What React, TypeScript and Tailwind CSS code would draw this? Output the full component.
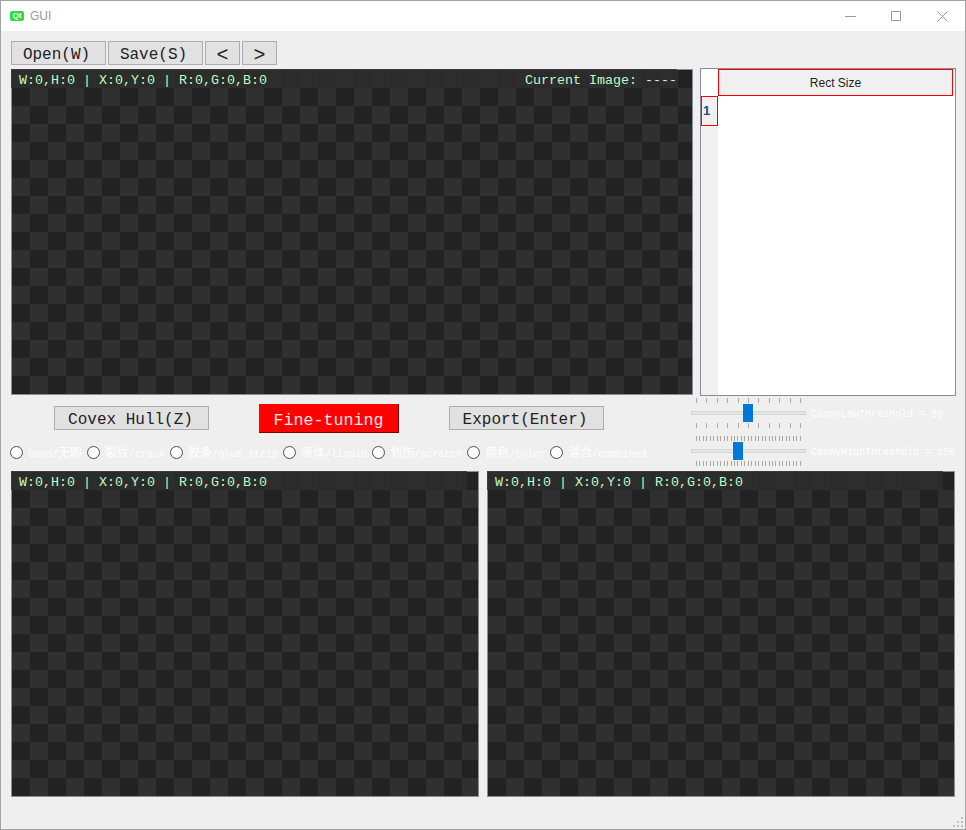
const mono = 'font-["Liberation_Mono",monospace]'

const radios = [
  ['Good/', '无暇'],
  ['', '裂纹', '/crack'],
  ['', '胶条', '/glue_strip'],
  ['', '液体', '/liquid'],
  ['', '划伤', '/scratch'],
  ['', '颜色', '/color'],
  ['', '混合', '/combined'],
]

function ImagePanel({ barClass, current }: { barClass: string; current?: boolean }) {
  return (
    <div className="relative h-[326px] border border-[#8c8c96] bg-[repeating-conic-gradient(#222222_0_25%,#303030_0_50%)] bg-[size:36px_36px]">
      <div className={`absolute -top-px -left-px h-[19px] bg-[#2d2d2d]/85 pl-[8px] pt-[4px] flex justify-between items-center text-[13.33px] leading-none text-[#c0fcc0] whitespace-pre font-["Liberation_Mono",monospace] ${barClass}`}>
        <span>W:0,H:0 | X:0,Y:0 | R:0,G:0,B:0</span>
        {current && <span>Current Image: ----</span>}
      </div>
    </div>
  )
}

function ToolButton({ label, className }: { label: string; className: string }) {
  return (
    <button className={`h-6 pt-[4px] bg-[#e1e1e1] border border-[#adadad] text-[#222] leading-none ${className} font-["Liberation_Mono",monospace]`}>
      {label}
    </button>
  )
}

function Ticks({ count }: { count: number }) {
  return (
    <div className="h-[5px] px-[5px] flex justify-between">
      {Array.from({ length: count }).map((_, i) => (
        <span key={i} className="w-px h-full bg-[#aaaa98]" />
      ))}
    </div>
  )
}

function Slider({ ticks, thumbClass, label }: { ticks: number; thumbClass: string; label: string }) {
  return (
    <div className="flex items-center gap-[5px]">
      <div className="w-[115px]">
        <Ticks count={ticks} />
        <div className="relative h-5 flex items-center">
          <div className="w-full h-1 bg-[#e4e6e4] border border-[#d2d8d2]" />
          <div className={`absolute top-px w-[10px] h-[18px] bg-[#0078d7] ${thumbClass}`} />
        </div>
        <Ticks count={ticks} />
      </div>
      <span className={`pt-[4px] text-[10px] leading-none text-white whitespace-pre ${mono}`}>{label}</span>
    </div>
  )
}

export default function App() {
  return (
    <div className="relative w-[966px] h-[830px] overflow-hidden flex flex-col bg-[#efefef] border border-[#a3a3a3]">
      <div className="absolute -top-px -left-px w-[350px] h-px bg-[#3a3a3a]" />

      {/* title bar */}
      <div className="h-[30px] shrink-0 bg-white flex items-center pl-[9px] pr-[17px]">
        <div className="w-[14px] h-[10px] rounded-[2px] bg-[#2cde45] text-white text-[8px] leading-[10px] font-bold text-center font-['Liberation_Sans',sans-serif]">
          Qt
        </div>
        <span className="ml-[6px] text-[12px] text-[#999] font-['Liberation_Sans',sans-serif]">GUI</span>
        <div className="ml-auto flex items-center gap-[35px]">
          <svg width="11" height="11" viewBox="0 0 11 11" stroke="#999" fill="none">
            <path d="M0 5.5H11" />
          </svg>
          <svg width="11" height="11" viewBox="0 0 11 11" stroke="#999" fill="none">
            <rect x="0.5" y="0.5" width="9" height="9" />
          </svg>
          <svg width="11" height="11" viewBox="0 0 11 11" stroke="#999" fill="none">
            <path d="M0.5 0.5L10.5 10.5M10.5 0.5L0.5 10.5" />
          </svg>
        </div>
      </div>

      <div className="flex-1 pl-[10px] pt-[10px]">
        {/* toolbar */}
        <div className="flex gap-[2px] mb-[3px]">
          <ToolButton label="Open(W)" className="w-[95px] pr-[4px] text-[16px]" />
          <ToolButton label="Save(S)" className="w-[95px] pr-[4px] text-[16px]" />
          <ToolButton label="<" className="w-[35px] text-[20px]" />
          <ToolButton label=">" className="w-[35px] text-[20px]" />
        </div>

        {/* main image + table */}
        <div className="flex items-start gap-[7px] h-[328px]">
          <div className="w-[682px] mt-px">
            <ImagePanel barClass="w-[666px]" current />
          </div>
          <div className="relative w-[256px] h-[328px] border border-[#8c8c96] bg-white flex">
            <div className="w-[17px] bg-[#f0f0f0] flex flex-col">
              <div className="h-[27px] bg-white" />
              <div className="h-[30px] border border-[#ff0000] flex items-center pl-px text-[13px] font-bold text-[#1c4f80] font-['Liberation_Sans',sans-serif]">
                1
              </div>
            </div>
            <div className="w-[235px] h-[27px] bg-[#f0f0f0] border border-[#ff0000] flex items-center justify-center text-[12px] text-[#222] font-['Liberation_Sans',sans-serif]">
              Rect Size
            </div>
          </div>
        </div>

        {/* actions, labels and sliders */}
        <div className="flex h-[75px]">
          <div className="w-[680px] pt-[8px]">
            <div className="flex items-start gap-[50px] ml-[43px]">
              <ToolButton label="Covex Hull(Z)" className="w-[155px] pr-[2px] mt-[2px] text-[16px]" />
              <button className={`w-[140px] h-[29px] pt-[6px] bg-[#ff0000] border-r border-b border-[#7a0000] border-t-[#ff0000] text-[#ffe8e8] text-[16.67px] leading-none ${mono}`}>
                Fine-tuning
              </button>
              <ToolButton label="Export(Enter)" className="w-[155px] pr-[3px] mt-[2px] text-[16px]" />
            </div>
            <div className="flex gap-[5px] mt-[13px] -ml-px">
              {radios.map((r, i) => (
                <label key={i} className={`flex items-center gap-[5px] h-[13px] text-[10px] leading-none text-white whitespace-pre ${mono}`}>
                  <span className="w-[13px] h-[13px] rounded-full bg-white border border-[#4d4d4d]" />
                  <span>
                    {r[0]}
                    <span className="text-[12px] font-['Noto_Sans_CJK_SC',sans-serif]">{r[1]}</span>
                    {r[2]}
                  </span>
                </label>
              ))}
            </div>
          </div>
          <div className="pt-[2px] flex flex-col gap-[8px]">
            <Slider ticks={11} thumbClass="left-[52px]" label="CannyLowThreshold = 50" />
            <Slider ticks={31} thumbClass="left-[42px]" label="CannyHighThreshold = 150" />
          </div>
        </div>

        {/* lower image panels */}
        <div className="flex gap-[8px]">
          <div className="w-[468px]">
            <ImagePanel barClass="w-[456px]" />
          </div>
          <div className="w-[468px]">
            <ImagePanel barClass="w-[456px]" />
          </div>
        </div>
      </div>

      {/* resize grip */}
      <svg className="absolute right-[1px] bottom-[1px]" width="11" height="11" viewBox="0 0 11 11" fill="#bdbdbd">
        <rect x="8" y="0" width="2" height="2" />
        <rect x="4" y="4" width="2" height="2" />
        <rect x="8" y="4" width="2" height="2" />
        <rect x="0" y="8" width="2" height="2" />
        <rect x="4" y="8" width="2" height="2" />
        <rect x="8" y="8" width="2" height="2" />
      </svg>
    </div>
  )
}
